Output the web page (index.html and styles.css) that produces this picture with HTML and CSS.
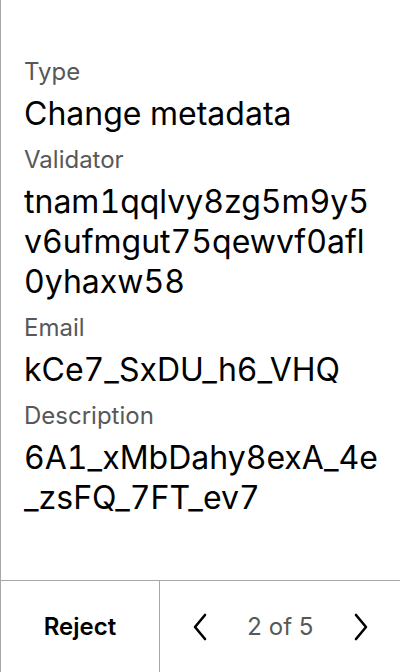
FILE: index.html
```html
<!DOCTYPE html>
<html lang="en">
<head>
<meta charset="utf-8">
<link rel="stylesheet" href="styles.css">
</head>
<body>
<div class="screen">
  <div class="content">
    <div class="field">
      <div class="label">Type</div>
      <div class="value">Change metadata</div>
    </div>
    <div class="field">
      <div class="label">Validator</div>
      <div class="value">tnam1qqlvy8zg5m9y5v6ufmgut75qewvf0afl0yhaxw58</div>
    </div>
    <div class="field">
      <div class="label">Email</div>
      <div class="value">kCe7_SxDU_h6_VHQ</div>
    </div>
    <div class="field">
      <div class="label">Description</div>
      <div class="value">6A1_xMbDahy8exA_4e_zsFQ_7FT_ev7</div>
    </div>
  </div>
  <div class="footer">
    <div class="reject">Reject</div>
    <div class="pager">
      <svg class="chev" width="16" height="28" viewBox="0 0 16 28"><path d="M13 2 L3 14 L13 26" fill="none" stroke="#000" stroke-width="2.6" stroke-linecap="round" stroke-linejoin="round"/></svg>
      <span class="count">2 of 5</span>
      <svg class="chev" width="16" height="28" viewBox="0 0 16 28"><path d="M3 2 L13 14 L3 26" fill="none" stroke="#000" stroke-width="2.6" stroke-linecap="round" stroke-linejoin="round"/></svg>
    </div>
  </div>
</div>
</body>
</html>
```

FILE: styles.css
```css
* { box-sizing: border-box; }
html, body { margin: 0; padding: 0; background: #fff; }
body { font-family: Inter, "Noto Sans", sans-serif; color: #000; font-variant-numeric: tabular-nums; }
.screen {
  width: 400px;
  height: 672px;
  display: flex;
  flex-direction: column;
  border-left: 1px solid #a8a8a8;
}
.content {
  flex: 1;
  padding: 56px 20px 0 23px;
  display: flex;
  flex-direction: column;
  gap: 10px;
}
.field { display: flex; flex-direction: column; gap: 6px; }
.label { font-size: 24px; line-height: 32px; color: #585858; }
.value { font-size: 32px; line-height: 40px; color: #000; word-break: break-all; }
.footer {
  height: 92px;
  border-top: 1px solid #a8a8a8;
  display: grid;
  grid-template-columns: 159px 1fr;
}
.reject {
  border-right: 1px solid #a8a8a8;
  display: flex;
  align-items: center;
  justify-content: center;
  font-size: 24px;
  font-weight: 600;
}
.pager {
  display: flex;
  align-items: center;
  justify-content: space-between;
  padding: 0 31px 0 32px;
}
.count { font-size: 24px; color: #585858; }
.chev { display: block; }
```
